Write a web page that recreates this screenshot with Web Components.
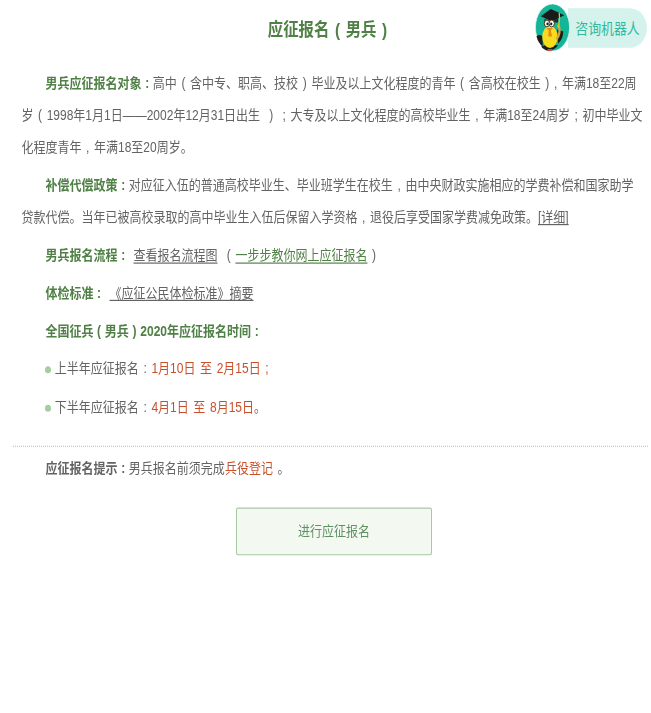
<!DOCTYPE html>
<html>
<head>
<meta charset="utf-8">
<style>
    html, body { margin: 0; padding: 0; background: #fff; }
    body { font-family: "Liberation Sans", "Noto Sans CJK SC", sans-serif; overflow: hidden; }
    b { font-weight: bold; color: #4f8045; word-spacing: .4px; }
    tip-line b { color: #636363; }
    u { text-underline-offset: 2px; }
    u.green { color: #4f8045; }
    em { font-style: normal; color: #c8502a; }
</style>
</head>
<body>
<signup-page>
    <robot-badge slot="badge">咨询机器人</robot-badge>
    <info-line>
        <b>男兵应征报名对象 : </b>高中 ( 含中专、职高、技校 ) 毕业及以上文化程度的青年 ( 含高校在校生 ) , 年满18至22周岁 ( 1998年1月1日——2002年12月31日出生&nbsp; )&nbsp; ; 大专及以上文化程度的高校毕业生 , 年满18至24周岁 ; 初中毕业文化程度青年 , 年满18至20周岁。
    </info-line>
    <info-line>
        <b>补偿代偿政策 : </b>对应征入伍的普通高校毕业生、毕业班学生在校生 , 由中央财政实施相应的学费补偿和国家助学贷款代偿。当年已被高校录取的高中毕业生入伍后保留入学资格 , 退役后享受国家学费减免政策。<u>[详细]</u>
    </info-line>
    <info-line>
        <b>男兵报名流程 : </b>&nbsp;<u>查看报名流程图</u>&nbsp; ( <u class="green">一步步教你网上应征报名</u> )
    </info-line>
    <info-line>
        <b>体检标准 : </b>&nbsp;<u>《应征公民体检标准》摘要</u>
    </info-line>
    <info-line>
        <b>全国征兵 ( 男兵 ) 2020年应征报名时间 :</b>
    </info-line>
    <info-line dot>上半年应征报名 : <em>1月10日 至 2月15日 ;</em></info-line>
    <info-line dot>下半年应征报名 : <em>4月1日 至 8月15日。</em></info-line>
    <tip-line slot="tip"><b>应征报名提示 : </b>男兵报名前须完成<em>兵役登记</em> 。</tip-line>
    <action-button slot="action">进行应征报名</action-button>
</signup-page>
<script>
// the reference is stretched vertically: layout is done at 611px tall, then scaled to 713
class SignupPage extends HTMLElement {
    constructor() {
        super()
        this.attachShadow({ mode: 'open' })
        this.shadowRoot.innerHTML = `
            <style>
                :host { display: block; width: 651px; height: 611px; transform: scaleY(1.1667); transform-origin: 0 0; color: #636363; font-size: 12px; word-spacing: 1.3px; }
                header { position: relative; height: 55.7px; padding-left: 4px; display: flex; align-items: center; justify-content: center; box-sizing: border-box; }
                h1 { margin: 0 0 8.6px; font-size: 15.4px; font-weight: bold; color: #4f8045; }
                .badge { position: absolute; right: 4px; top: 3.4px; }
                .lines { padding: 0 8px 0 21.4px; }
                .rule { border-top: 1px dotted #c4c4c4; margin: 16.3px 3px 0 13px; }
                .tip { padding: 4.3px 8px 0 21.4px; }
                .action { display: flex; justify-content: center; padding: 19.8px 0 0 17px; }
            </style>
            <header>
                <h1>应征报名 ( 男兵 )</h1>
                <div class="badge"><slot name="badge"></slot></div>
            </header>
            <div class="lines"><slot></slot></div>
            <div class="rule"></div>
            <div class="tip"><slot name="tip"></slot></div>
            <div class="action"><slot name="action"></slot></div>
        `
    }
}

class RobotBadge extends HTMLElement {
    constructor() {
        super()
        this.attachShadow({ mode: 'open' })
        this.shadowRoot.innerHTML = `
            <style>
                :host { display: block; }
                .wrap { display: flex; align-items: center; }
                svg { display: block; width: 35px; height: 41.1px; position: relative; z-index: 1; }
                .pill { margin-left: -2px; height: 33.4px; width: 79px; display: flex; align-items: center; justify-content: center; background: #d5f3ec; border-radius: 0 17px 17px 0; color: #2fb9a0; font-size: 12.9px; white-space: nowrap; }
            </style>
            <div class="wrap">
                <svg viewBox="0 0 41 48">
                    <ellipse cx="20.5" cy="24" rx="20" ry="23.6" fill="#15b598" stroke="#e4f7f2" stroke-width=".8"/>
                    <path d="M1.8 33 Q5 30 9 33 L9 43 Q4 40 1.8 33 Z" fill="#1d1d18"/>
                    <path d="M26 26 L33 28 Q33 36 27 40 Z" fill="#1d1d18"/>
                    <path d="M7 43 Q17 40 27 42 Q22 47 16 47.4 Q11 47 7 43 Z" fill="#1d1d18"/>
                    <path d="M6.7 12.8 L18.5 5.4 L34.3 11.8 L20 18 Z" fill="#1b1b1b"/>
                    <path d="M11 15.5 L11 19 L27 19 L27 14.8 L20 18 Z" fill="#2a2a24"/>
                    <ellipse cx="17.5" cy="33.5" rx="9" ry="11.2" fill="#f7dc1e"/>
                    <ellipse cx="14" cy="20" rx="3.1" ry="3.4" fill="#fff" stroke="#3a3018" stroke-width="1"/>
                    <ellipse cx="19.6" cy="20" rx="3.1" ry="3.4" fill="#fff" stroke="#3a3018" stroke-width="1"/>
                    <circle cx="14.6" cy="20.4" r="1.3" fill="#1d1d18"/>
                    <circle cx="19" cy="20.4" r="1.3" fill="#1d1d18"/>
                    <path d="M13.5 24.5 L21 24.5 L18.5 27 L20 33 L15.5 33 L16 27 Z" fill="#e68a1c"/>
                    <path d="M25 36 Q31 30 27.5 21" stroke="#cfa84a" stroke-width="2.6" fill="none"/>
                    <path d="M28.4 9.4 Q29.5 18 26.8 24" stroke="#e4c227" stroke-width="1.5" fill="none"/>
                    <path d="M14.6 45.6 L20.5 45.6 L18.5 47.8 L15.5 47.8 Z" fill="#d9482b"/>
                </svg>
                <div class="pill"><slot></slot></div>
            </div>
        `
    }
}

class InfoLine extends HTMLElement {
    constructor() {
        super()
        this.attachShadow({ mode: 'open' })
        this.shadowRoot.innerHTML = `
            <style>
                :host { display: block; line-height: 27.43px; padding: 2.57px 0; text-indent: 24px; }
                .dot { display: none; width: 6px; height: 6px; border-radius: 50%; background: #a0d0a0; margin-right: 3.4px; vertical-align: 0; }
                :host([dot]) .dot { display: inline-block; }
            </style>
            <span class="dot"></span><slot></slot>
        `
    }
}

class TipLine extends HTMLElement {
    constructor() {
        super()
        this.attachShadow({ mode: 'open' })
        this.shadowRoot.innerHTML = `
            <style>
                :host { display: block; line-height: 27.43px; text-indent: 24px; }
            </style>
            <slot></slot>
        `
    }
}

class ActionButton extends HTMLElement {
    constructor() {
        super()
        this.attachShadow({ mode: 'open' })
        this.shadowRoot.innerHTML = `
            <style>
                :host { display: block; }
                button { display: block; width: 195.4px; height: 41.1px; padding: 0 0 3px; background: #f3f9f1; border: 1.4px solid #a8c9a2; border-radius: 2px; color: #5f8f62; font: inherit; font-size: 12px; }
            </style>
            <button><slot></slot></button>
        `
    }
}

customElements.define('signup-page', SignupPage)
customElements.define('robot-badge', RobotBadge)
customElements.define('info-line', InfoLine)
customElements.define('tip-line', TipLine)
customElements.define('action-button', ActionButton)
</script>
</body>
</html>
